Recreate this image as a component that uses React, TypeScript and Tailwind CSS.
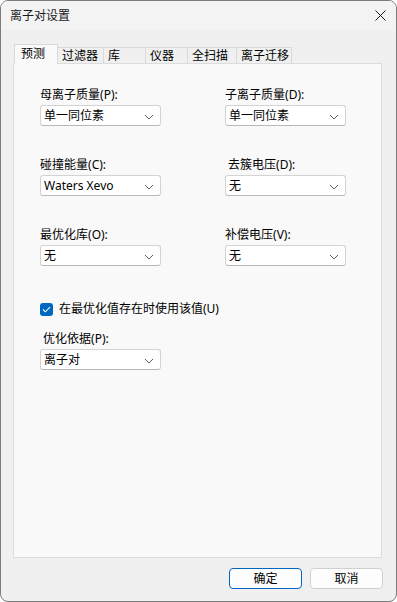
import React from "react";

const font = { fontFamily: '"Noto Sans", "Noto Sans CJK SC", sans-serif' };

const tabs = [
  { label: "预测", w: "w-[44px]", active: true },
  { label: "过滤器", w: "w-[47px]" },
  { label: "库", w: "w-[43px]" },
  { label: "仪器", w: "w-[43px]" },
  { label: "全扫描", w: "w-[50px]" },
  { label: "离子迁移", w: "w-[56px]" },
];

const Chevron = () => (
  <svg width="10" height="6" viewBox="0 0 10 6" className="absolute right-[6px] top-[8px]">
    <path d="M1 1 L5 5 L9 1" fill="none" stroke="#5f5f5f" strokeWidth="1" />
  </svg>
);

const Select = ({ value }: { value: string }) => (
  <div className="relative h-[21px] w-[121px] rounded-[3px] border border-[#d3d3d3] border-b-[#b8b8b8] bg-white pl-[3px] text-[12px] leading-[19px] text-black">
    {value}
    <Chevron />
  </div>
);

const Field = ({ label, hot, value, indent }: { label: string; hot: string; value: string; indent?: boolean }) => (
  <div className="flex flex-col">
    <div className={`h-[16px] text-[12px] leading-[16px] text-black ${indent ? "pl-[3px]" : ""}`}>
      {label}({hot}):
    </div>
    <div className="mt-[2px]">
      <Select value={value} />
    </div>
  </div>
);

const App: React.FC = () => {
  return (
    <div className="h-[602px] w-[397px] bg-white" style={font}>
      <div className="flex h-[602px] w-[397px] flex-col overflow-hidden rounded-[8px] border border-[#7c7c7c] bg-[#f0f0f0]">
        {/* title bar */}
        <div className="flex h-[29px] shrink-0 items-center justify-between bg-[#f3f3f3] pl-[9px] pr-[10px]">
          <span className="text-[12px] text-[#1a1a1a]">离子对设置</span>
          <svg width="11" height="11" viewBox="0 0 11 11">
            <path d="M0.5 0.5 L10.5 10.5 M10.5 0.5 L0.5 10.5" stroke="#1a1a1a" strokeWidth="1" />
          </svg>
        </div>

        {/* body */}
        <div className="flex flex-1 flex-col pl-[12px] pr-[13px]">
          {/* tab strip */}
          <div className="mt-[13px] flex h-[20px] items-end pl-px">
            {tabs.map((t) => (
              <div
                key={t.label}
                className={
                  t.active
                    ? `relative z-10 -mb-px h-[20px] ${t.w} border border-b-0 border-[#d9d9d9] bg-[#f9f9f9] pl-[6px] text-[12px] leading-[18px] text-black`
                    : `-ml-px h-[16px] ${t.w} border border-b-0 border-[#dadada] bg-[#f0f0f0] pl-[4px] text-[12px] leading-[15px] text-black`
                }
              >
                {t.label}
              </div>
            ))}
          </div>

          {/* panel */}
          <div className="h-[495px] w-[369px] border border-[#dcdcdc] bg-[#f9f9f9] pl-[26px] pt-[23px]">
            <div className="grid grid-cols-[121px_121px] gap-x-[64px] gap-y-[31px]">
              <Field label="母离子质量" hot="P" value="单一同位素" />
              <Field label="子离子质量" hot="D" value="单一同位素" />
              <Field label="碰撞能量" hot="C" value="Waters Xevo" />
              <Field label="去簇电压" hot="D" value="无" indent />
              <Field label="最优化库" hot="O" value="无" />
              <Field label="补偿电压" hot="V" value="无" />
            </div>

            <div className="mt-[35px] flex h-[16px] items-center">
              <div className="flex h-[13px] w-[13px] items-center justify-center rounded-[3px] bg-[#0067c0]">
                <svg width="9" height="7" viewBox="0 0 9 7">
                  <path d="M1 3.5 L3.4 5.8 L8 1.2" fill="none" stroke="white" strokeWidth="1.1" />
                </svg>
              </div>
              <span className="ml-[6px] text-[12px] leading-[16px] text-black">在最优化值存在时使用该值(U)</span>
            </div>

            <div className="mt-[14px]">
              <Field label="优化依据" hot="P" value="离子对" indent />
            </div>
          </div>

          {/* buttons */}
          <div className="mt-[10px] flex justify-end gap-[8px]">
            <button className="h-[21px] w-[73px] rounded-[4px] border border-[#0067c0] bg-[#fdfdfd] text-[12px] leading-[19px] text-black">
              确定
            </button>
            <button className="h-[21px] w-[73px] rounded-[4px] border border-[#d0d0d0] bg-[#fdfdfd] text-[12px] leading-[19px] text-black">
              取消
            </button>
          </div>
        </div>
      </div>
    </div>
  );
};

export default App;
